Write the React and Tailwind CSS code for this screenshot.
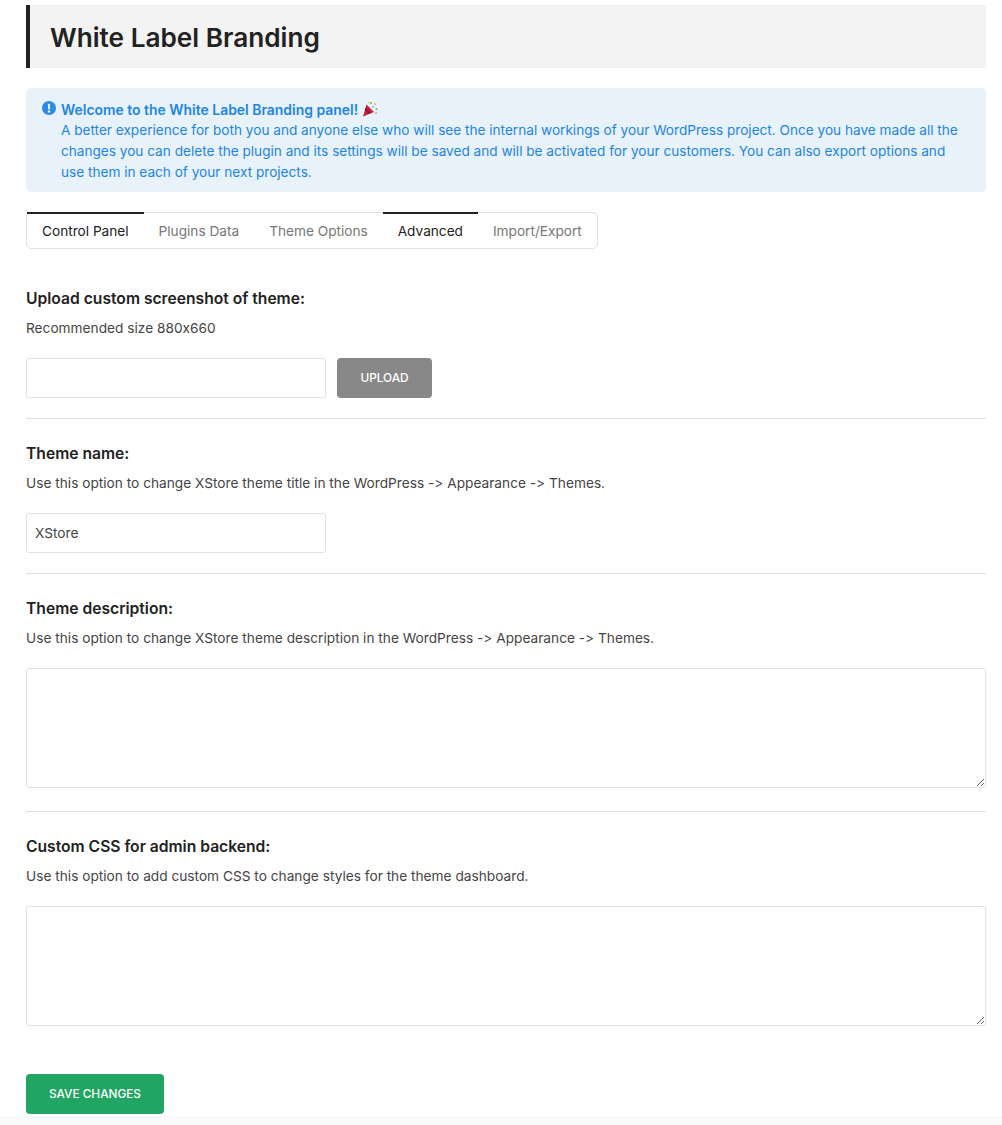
import React from 'react';

const tabs = [
  { label: 'Control Panel', active: true },
  { label: 'Plugins Data' },
  { label: 'Theme Options' },
  { label: 'Advanced', active: true },
  { label: 'Import/Export' },
];

function PartyPopper() {
  return (
    <svg viewBox="0 0 16 16" className="inline-block w-4 h-4 ml-[4px] align-[-2px]">
      <path d="M4.5 3.5 L12 11 L1 15.5 Z" fill="#c8203c" />
      <path d="M3.6 6.5 L9 12 L6.8 12.9 L2.8 8.8 Z" fill="#8e1830" />
      <circle cx="9" cy="2" r="1" fill="#6fb34a" />
      <circle cx="13" cy="3" r="1" fill="#e8b23a" />
      <circle cx="14.5" cy="8" r="1" fill="#6fb34a" />
      <circle cx="11" cy="6" r="0.8" fill="#4a90d9" />
      <circle cx="6.5" cy="1.5" r="0.7" fill="#e8b23a" />
      <circle cx="14" cy="12" r="0.8" fill="#d0506a" />
    </svg>
  );
}

function Divider() {
  return <div className="border-t border-[#e1e1e1]" />;
}

function Field({ title, desc, children }) {
  return (
    <div>
      <h3 className="text-[15.65px] leading-[22px] font-semibold text-[#222]">{title}</h3>
      <p className="mt-[8px] text-[13.7px] leading-[20px] text-[#444]">{desc}</p>
      <div className="mt-[20px]">{children}</div>
    </div>
  );
}

export default function App() {
  return (
    <div className="bg-white min-h-[1125px] font-['Inter',sans-serif] [font-variant-ligatures:none] [font-feature-settings:'calt'_0] overflow-hidden">
      <div className="pl-[26px] pr-[16px] pt-[5px]">
        <div className="h-[63px] flex items-center bg-[#f3f3f3] border-l-4 border-[#222] pl-[20px]">
          <h1 className="text-[26.2px] font-semibold text-[#222] leading-none pt-[4px]">White Label Branding</h1>
        </div>

        {/* Welcome notice */}
        <div className="mt-[20px] h-[104px] rounded-[5px] bg-[#e7f2fb] pt-[11px] pl-[16px] pr-[20px] flex text-[13.62px] leading-[21px] text-[#1f85e2]">
          <svg viewBox="0 0 16 16" className="w-[14px] h-[14px] mt-[2px] mr-[5px] shrink-0">
            <circle cx="8" cy="8" r="8" fill="#2a8ae6" />
            <rect x="6.8" y="3" width="2.4" height="6.6" rx="1" fill="#e7f2fb" />
            <circle cx="8" cy="11.9" r="1.4" fill="#e7f2fb" />
          </svg>
          <div>
            <div className="font-semibold text-[13.95px]">
              Welcome to the White Label Branding panel!
              <PartyPopper />
            </div>
            <p>
              A better experience for both you and anyone else who will see the internal workings of your WordPress project. Once you have made all the changes you can delete the plugin and its settings will be saved and will be activated for your customers. You can also export options and use them in each of your next projects.
            </p>
          </div>
        </div>

        {/* Tabs */}
        <div className="mt-[20px] flex w-fit h-[37px] border border-[#e1e1e1] rounded-[5px] bg-white">
          {tabs.map((tab) => (
            <div
              key={tab.label}
              className={`px-[15px] flex items-center text-[13.65px] -mt-px pt-[1px] border-t-2 ${
                tab.active ? 'border-[#222] text-[#222]' : 'border-transparent text-[#777]'
              }`}
            >
              {tab.label}
            </div>
          ))}
        </div>

        <div className="mt-[39px] flex flex-col">
          <Field title="Upload custom screenshot of theme:" desc="Recommended size 880x660">
            <div className="flex gap-[11px]">
              <input className="w-[300px] h-[40px] border border-[#e1e1e1] rounded-[3px] px-[8px] text-[14px]" />
              <button className="w-[95px] h-[40px] pt-[2px] rounded-[4px] bg-[#888] text-white text-[11.8px] font-medium">UPLOAD</button>
            </div>
          </Field>
          <div className="mt-[20px] mb-[24px]"><Divider /></div>
          <Field
            title="Theme name:"
            desc="Use this option to change XStore theme title in the WordPress -> Appearance -> Themes."
          >
            <input
              defaultValue="XStore"
              className="block w-[300px] h-[40px] border border-[#e1e1e1] rounded-[3px] px-[8px] text-[13.7px] text-[#444]"
            />
          </Field>
          <div className="mt-[20px] mb-[24px]"><Divider /></div>
          <Field
            title="Theme description:"
            desc="Use this option to change XStore theme description in the WordPress -> Appearance -> Themes."
          >
            <textarea className="block w-full h-[120px] border border-[#e1e1e1] rounded-[3px]" />
          </Field>
          <div className="mt-[23px] mb-[24px]"><Divider /></div>
          <Field
            title="Custom CSS for admin backend:"
            desc="Use this option to add custom CSS to change styles for the theme dashboard."
          >
            <textarea className="block w-full h-[120px] border border-[#e1e1e1] rounded-[3px]" />
          </Field>
        </div>

        <button className="mt-[48px] block w-[138px] h-[40px] pt-[2px] rounded-[4px] bg-[#20a562] text-white text-[11.8px] font-medium">
          SAVE CHANGES
        </button>
      </div>
      <div className="mt-[2px] h-[9px] bg-[#fafafa]" />
    </div>
  );
}
